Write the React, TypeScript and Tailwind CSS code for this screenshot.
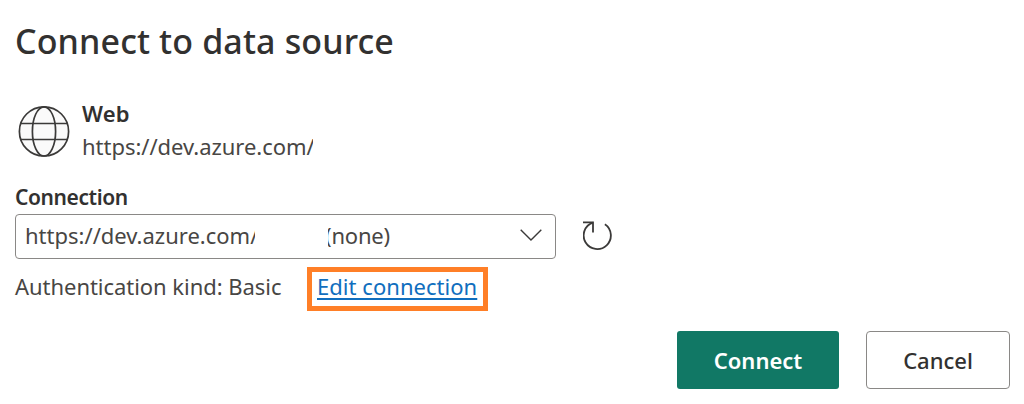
import React from "react";

function GlobeIcon() {
  return (
    <svg width="52" height="52" viewBox="0 0 52 52" fill="none" stroke="#3b3a39" strokeWidth="1.7" className="shrink-0">
      <circle cx="26" cy="26.4" r="24.6" fill="#fafafa" />
      <ellipse cx="26" cy="26.4" rx="11.6" ry="24.6" />
      <path d="M2.8 18.5H49.2M2.8 34.5H49.2" />
    </svg>
  );
}

function ChevronIcon() {
  return (
    <svg width="22" height="12" viewBox="0 0 22 12" fill="none" stroke="#3b3a39" strokeWidth="1.4">
      <path d="M.7 .8L11 11L21.3 .8" />
    </svg>
  );
}

function RefreshIcon() {
  return (
    <svg width="30" height="30" viewBox="0 0 30 30" fill="none" stroke="#3b3a39" strokeWidth="1.8">
      <path d="M0 1.4H10V11.5" />
      <path d="M9.8 1.6A13.6 13.6 0 1 0 21.9 3.2" />
    </svg>
  );
}

export default function App() {
  return (
    <main className="flex h-[404px] w-[1024px] flex-col overflow-hidden bg-white pl-[15px] pr-[14px] font-['Noto_Sans',sans-serif] text-[22px] text-[#484644]">
      <h1 className="mt-[17px] h-12 self-start whitespace-nowrap text-[34px] leading-[48px] font-medium tracking-[0.13px] text-[#323130]">
        Connect to data source
      </h1>
      <section className="mt-[32px] flex h-[68px] items-start gap-[12px] pl-[3px]">
        <div className="mt-[8px]"><GlobeIcon /></div>
        <div className="flex flex-col items-start whitespace-nowrap">
          <p className="h-[33px] leading-[32px] font-semibold tracking-[0.2px] text-[#323130]">Web</p>
          <p className="h-[33px] w-[231px] overflow-hidden leading-[32px] tracking-[-0.03px]">https://dev.azure.com/</p>
        </div>
      </section>
      <label className="mt-[16px] h-[33px] self-start text-[21px] leading-[32px] font-semibold tracking-[-0.4px] text-[#323130]">Connection</label>
      <div className="flex h-[45px] items-center gap-[27px]">
        <div className="flex h-[45px] w-[541px] items-center rounded-[4px] border border-[#8a8886] pl-[9px] pr-[13px] whitespace-nowrap">
          <span className="w-[230px] overflow-hidden pb-[2px]">https://dev.azure.com/</span>
          <span className="ml-[73px] overflow-hidden pb-[2px]">
            <span className="-ml-[3px] tracking-[-0.2px]">(none)</span>
          </span>
          <span className="ml-auto pb-[4px]"><ChevronIcon /></span>
        </div>
        <div className="pb-[2px]"><RefreshIcon /></div>
      </div>
      <div className="mt-[8px] flex h-[44px] items-center whitespace-nowrap">
        <span className="w-[292px] pb-[7px] leading-[32px] tracking-[-0.04px]">Authentication kind: Basic</span>
        <span className="flex h-[44px] w-[181px] items-center border-[5px] border-[#ff7f27] pb-[7px] pl-[5px]">
          <a className="leading-[32px] tracking-[0.04px] text-[#106ebe] underline decoration-2 underline-offset-[3px]">Edit connection</a>
        </span>
      </div>
      <div className="mt-[20px] flex justify-end gap-[27px]">
        <button className="h-[58px] w-[162px] rounded-[3px] bg-[#117865] font-semibold text-white">Connect</button>
        <button className="h-[58px] w-[144px] rounded-[4px] border border-[#8a8886] bg-white font-medium text-[#323130]">Cancel</button>
      </div>
    </main>
  );
}
